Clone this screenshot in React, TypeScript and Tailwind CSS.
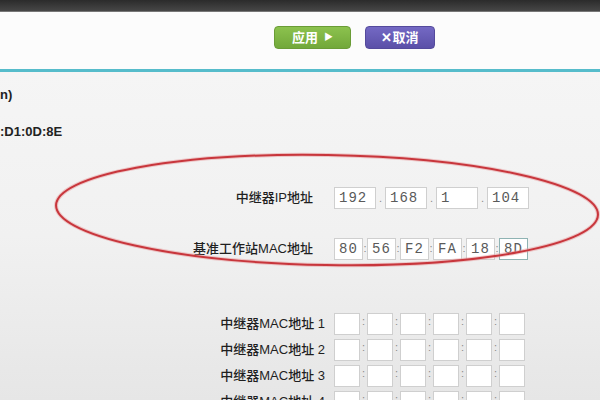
import React from 'react';

const ipParts = ['192', '168', '1', '104'];
const baseMac = ['80', '56', 'F2', 'FA', '18', '8D'];

const CJK = { fontFamily: '"Liberation Sans", "Noto Sans CJK SC", sans-serif' };

const Box: React.FC<{ value?: string; className: string; focused?: boolean }> = ({ value, className, focused }) => (
    <div
        className={`h-[22px] bg-white border flex items-center pl-[4px] font-['Liberation_Mono',monospace] text-[14px] tracking-[1px] text-[#5a5a5a] ${
            focused ? 'border-[#8fb3b3]' : 'border-[#cfcfcf]'
        } ${className}`}
    >
        {value}
    </div>
);

const Sep: React.FC<{ ch: string; className: string }> = ({ ch, className }) => (
    <div className={`h-[22px] flex items-end justify-center pb-[3px] text-[11px] text-[#8a8a8a] ${className}`}>{ch}</div>
);

export default function App() {
    return (
        <div className="relative w-[600px] h-[400px] overflow-hidden" style={CJK}>
            {/* window title strip */}
            <div className="h-[12px] bg-gradient-to-b from-[#2b2b2b] to-[#474747] border-b border-[#777]" />

            {/* action bar */}
            <div className="h-[57px] bg-[#fcfcfc] flex items-start pt-[14px] pl-[274px] gap-[14px]">
                <button className="w-[77px] h-[23px] rounded-[4px] bg-gradient-to-b from-[#8cc24e] to-[#72a83a] border border-[#6a9c36] text-white text-[13px] font-bold flex items-center justify-center gap-[6px]">
                    应用 <span className="text-[9px]">▶</span>
                </button>
                <button className="w-[70px] h-[23px] rounded-[4px] bg-gradient-to-b from-[#7469c4] to-[#5b50a8] border border-[#544a9c] text-white text-[13px] font-bold flex items-center justify-center">
                    ✕取消
                </button>
            </div>
            <div className="h-[3px] bg-[#56bccb]" />

            {/* settings body */}
            <div className="h-[328px] bg-gradient-to-b from-[#f5f5f5] via-[#f1f1f1] to-[#e6e6e6] flex flex-col">
                <div className="mt-[15px] h-[16px] text-[13px] font-bold text-[#222] leading-[16px]">n)</div>
                <div className="mt-[21px] h-[16px] text-[13px] font-bold text-[#222] leading-[16px]">:D1:0D:8E</div>

                <div className="mt-[47px] flex items-center">
                    <div className="w-[313px] text-right text-[13px] font-medium text-[#1f1f1f]">中继器IP地址</div>
                    <div className="ml-[21px] flex">
                        {ipParts.map((p, i) => (
                            <React.Fragment key={i}>
                                {i > 0 && <Sep ch="." className="w-[9px]" />}
                                <Box value={p} className="w-[42px]" />
                            </React.Fragment>
                        ))}
                    </div>
                </div>

                <div className="mt-[29px] flex items-center">
                    <div className="w-[313px] text-right text-[13px] font-medium text-[#1f1f1f]">基准工作站MAC地址</div>
                    <div className="ml-[21px] flex">
                        {baseMac.map((p, i) => (
                            <React.Fragment key={i}>
                                {i > 0 && <Sep ch=":" className="w-[4px] pb-[4px]" />}
                                <Box value={p} className="w-[29px]" focused={i === 5} />
                            </React.Fragment>
                        ))}
                    </div>
                </div>

                <div className="mt-[53px] flex flex-col gap-[4px]">
                    {[1, 2, 3, 4].map(n => (
                        <div key={n} className="flex items-center">
                            <div className="w-[325px] text-right text-[13px] font-medium text-[#1f1f1f]">中继器MAC地址 {n}</div>
                            <div className="ml-[9px] flex">
                                {[0, 1, 2, 3, 4, 5].map(i => (
                                    <React.Fragment key={i}>
                                        {i > 0 && <Sep ch=":" className="w-[7px] pb-[6px]" />}
                                        <Box className="w-[26px]" />
                                    </React.Fragment>
                                ))}
                            </div>
                        </div>
                    ))}
                </div>
            </div>

            {/* hand-drawn highlight ring */}
            <svg className="absolute inset-0 pointer-events-none" width="600" height="400" viewBox="0 0 600 400">
                <g transform="rotate(1 327 211)">
                    <ellipse cx="327" cy="210" rx="271" ry="55" fill="none" stroke="#e89a9c" strokeWidth="4" opacity="0.5" />
                    <ellipse cx="327" cy="210" rx="271" ry="55" fill="none" stroke="#c8363c" strokeWidth="2" />
                </g>
            </svg>
        </div>
    );
}
